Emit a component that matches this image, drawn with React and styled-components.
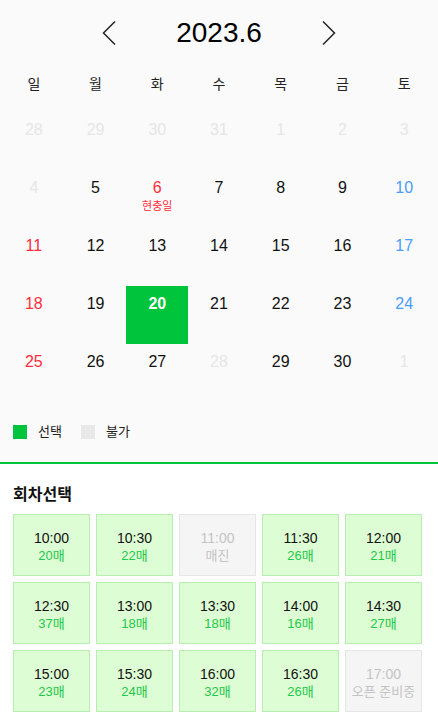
import styled, { createGlobalStyle } from 'styled-components';

const GlobalStyle = createGlobalStyle`
  html, body { margin: 0; padding: 0; background: #fff; }
  body { font-family: "Liberation Sans", "Noto Sans CJK KR", sans-serif; color: #111; }
`;

const Page = styled.div`
  width: 438px;
`;

const CalendarSection = styled.section`
  background: #fafafa;
  border-bottom: 2px solid #00c43c;
  padding: 16px 3px 23px;
`;

const Header = styled.div`
  display: flex;
  justify-content: center;
  align-items: center;
  height: 34px;
`;

const ArrowButton = styled.button`
  width: 14px;
  height: 26px;
  padding: 0;
  border: 0;
  background: none;
  display: flex;
  align-items: center;
  justify-content: center;
  cursor: pointer;
`;

const Title = styled.h2`
  width: 206px;
  margin: 0;
  text-align: center;
  font-size: 28px;
  font-weight: 400;
  line-height: 34px;
  color: #000;
`;

const Week = styled.div`
  display: grid;
  grid-template-columns: repeat(7, 1fr);
  margin-top: 18px;
  height: 30px;
  align-items: center;
  text-align: center;
  font-size: 14px;
  color: #222;
`;

const Days = styled.div`
  display: grid;
  grid-template-columns: repeat(7, 1fr);
  grid-auto-rows: 58px;
  margin-top: 14px;
`;

const dayColor = ({ $tone }) =>
  ({ muted: '#e6e6e6', sun: '#ff2d3a', sat: '#4a9cf8', selected: '#fff' }[$tone] || '#111');

const Day = styled.div`
  display: flex;
  flex-direction: column;
  align-items: center;
  padding-top: 8px;
  box-sizing: border-box;
  background: ${({ $tone }) => ($tone === 'selected' ? '#00c43c' : 'transparent')};
  color: ${dayColor};
  font-size: 16px;
  font-weight: ${({ $tone }) => ($tone === 'selected' ? 700 : 400)};
  line-height: 20px;
`;

const Holiday = styled.span`
  font-size: 11px;
  line-height: 14px;
  margin-top: 1px;
  color: #ff2d3a;
`;

const Legend = styled.div`
  display: flex;
  align-items: center;
  margin-top: 23px;
  padding-left: 10px;
  font-size: 13px;
  color: #222;
`;

const Swatch = styled.span`
  width: 14px;
  height: 14px;
  background: ${({ $color }) => $color};
  margin-right: 11px;
`;

const LegendLabel = styled.span`
  margin-right: 19px;
  line-height: 14px;
`;

const SlotSection = styled.section`
  background: #fff;
  padding: 21px 13px 16px;
`;

const SlotTitle = styled.h3`
  margin: 0 0 9px;
  font-size: 16px;
  font-weight: 700;
  line-height: 20px;
  color: #111;
`;

const SlotGrid = styled.div`
  display: grid;
  grid-template-columns: repeat(5, 77px);
  grid-auto-rows: 62px;
  gap: 6px;
`;

const Slot = styled.button`
  display: flex;
  flex-direction: column;
  align-items: center;
  justify-content: center;
  padding: 4px 0 0;
  box-sizing: border-box;
  font-family: inherit;
  background: ${({ $off }) => ($off ? '#f5f5f5' : '#ddfdd4')};
  border: 1px solid ${({ $off }) => ($off ? '#e6e6e6' : '#b8efb0')};
  cursor: ${({ $off }) => ($off ? 'default' : 'pointer')};
`;

const SlotTime = styled.span`
  font-size: 14px;
  line-height: 18px;
  color: ${({ $off }) => ($off ? '#c4c4c4' : '#111')};
`;

const SlotCount = styled.span`
  font-size: 13px;
  line-height: 18px;
  color: ${({ $off }) => ($off ? '#c4c4c4' : '#1ec84a')};
`;

const Chevron = ({ dir }) => (
  <svg width="14" height="26" viewBox="0 0 14 26" fill="none">
    <path
      d={dir === 'left' ? 'M13 1.5 L1.5 13 L13 24.5' : 'M1 1.5 L12.5 13 L1 24.5'}
      stroke="#222"
      strokeWidth="1.5"
    />
  </svg>
);

const weekNames = ['일', '월', '화', '수', '목', '금', '토'];

// 5월 말 + 6월 + 7월 1일, 지난 날짜(1~4일)와 28일은 불가
const cells = [
  ...[28, 29, 30, 31].map((d) => ({ d, muted: true })),
  ...Array.from({ length: 30 }, (_, i) => ({ d: i + 1, muted: i + 1 <= 4 || i + 1 === 28 })),
  { d: 1, muted: true },
];

const slots = [
  ['10:00', '20매'], ['10:30', '22매'], ['11:00', '매진', true], ['11:30', '26매'], ['12:00', '21매'],
  ['12:30', '37매'], ['13:00', '18매'], ['13:30', '18매'], ['14:00', '16매'], ['14:30', '27매'],
  ['15:00', '23매'], ['15:30', '24매'], ['16:00', '32매'], ['16:30', '26매'], ['17:00', '오픈 준비중', true],
];

function toneOf(c, i) {
  if (c.muted) return 'muted';
  if (c.d === 20) return 'selected';
  if (c.d === 6) return 'sun';
  if (i % 7 === 0) return 'sun';
  if (i % 7 === 6) return 'sat';
  return '';
}

export default function App() {
  return (
    <Page>
      <GlobalStyle />
      <CalendarSection>
        <Header>
          <ArrowButton aria-label="이전 달"><Chevron dir="left" /></ArrowButton>
          <Title>2023.6</Title>
          <ArrowButton aria-label="다음 달"><Chevron dir="right" /></ArrowButton>
        </Header>
        <Week>
          {weekNames.map((w) => <span key={w}>{w}</span>)}
        </Week>
        <Days>
          {cells.map((c, i) => (
            <Day key={i} $tone={toneOf(c, i)}>
              {c.d}
              {c.d === 6 && !c.muted && <Holiday>현충일</Holiday>}
            </Day>
          ))}
        </Days>
        <Legend>
          <Swatch $color="#00c43c" />
          <LegendLabel>선택</LegendLabel>
          <Swatch $color="#e8e8e8" />
          <LegendLabel>불가</LegendLabel>
        </Legend>
      </CalendarSection>
      <SlotSection>
        <SlotTitle>회차선택</SlotTitle>
        <SlotGrid>
          {slots.map(([t, n, off]) => (
            <Slot key={t} $off={off}>
              <SlotTime $off={off}>{t}</SlotTime>
              <SlotCount $off={off}>{n}</SlotCount>
            </Slot>
          ))}
        </SlotGrid>
      </SlotSection>
    </Page>
  );
}
